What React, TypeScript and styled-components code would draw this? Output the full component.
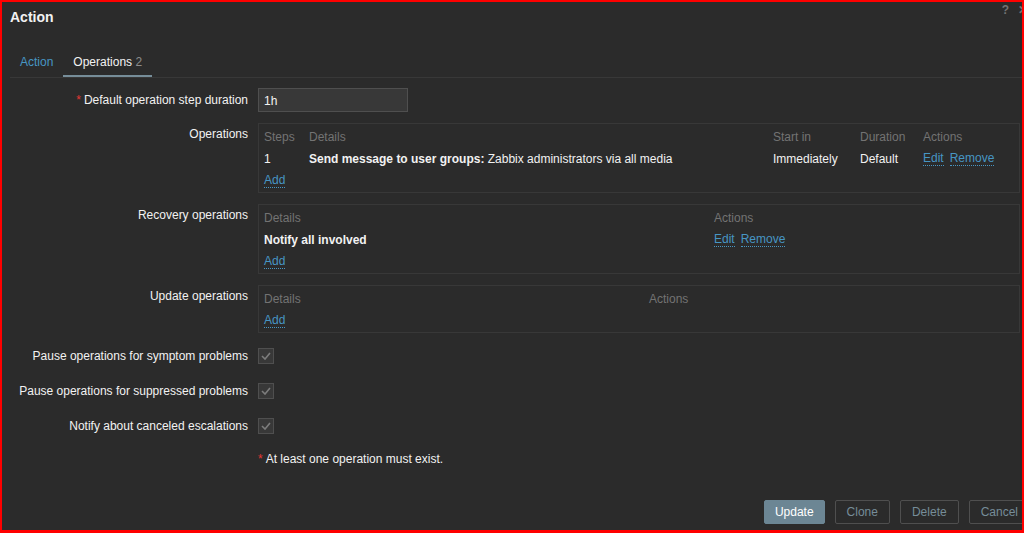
import styled, { createGlobalStyle } from 'styled-components';

const GlobalStyle = createGlobalStyle`
  html, body {
    margin: 0;
    padding: 0;
    background: #2b2b2b;
  }
  body {
    font-family: "Liberation Sans", Arial, sans-serif;
    font-size: 12px;
    color: #f2f2f2;
  }
`;

const Frame = styled.div`
  width: 1024px;
  height: 533px;
  box-sizing: border-box;
  border: 2px solid #ff0000;
  border-bottom-width: 3px;
  background: #2b2b2b;
  overflow: hidden;
  display: flex;
  flex-direction: column;
`;

const Header = styled.div`
  height: 47px;
  box-sizing: border-box;
  padding: 6px 0 0 8px;
  display: flex;
  align-items: flex-start;
`;

const Title = styled.h4`
  margin: 0;
  font-size: 14px;
  line-height: 18px;
  font-weight: bold;
  color: #f2f2f2;
`;

const HeaderIcons = styled.div`
  margin-left: auto;
  margin-top: -5px;
  margin-right: -6px;
  display: flex;
  gap: 9px;
`;

const HeaderIcon = styled.span`
  font-size: 12px;
  font-weight: bold;
  color: #737373;
  line-height: 14px;
`;

const Tabs = styled.div`
  margin-left: 8px;
  display: flex;
  border-bottom: 1px solid #383838;
`;

const Tab = styled.div<{ $active?: boolean }>`
  padding: 6px 10px;
  line-height: 14px;
  border-bottom: 2px solid ${(p) => (p.$active ? '#768d99' : 'transparent')};
  color: ${(p) => (p.$active ? '#f2f2f2' : '#4796c4')};
`;

const TabCount = styled.span`
  color: #8c8c8c;
`;

const Form = styled.div`
  padding: 10px 2px 0 8px;
  display: grid;
  grid-template-columns: 238px 1fr;
  column-gap: 10px;
  row-gap: 11px;
  align-items: center;
`;

const Label = styled.label<{ $top?: boolean }>`
  text-align: right;
  line-height: 22px;
  align-self: ${(p) => (p.$top ? 'start' : 'center')};
  color: #f2f2f2;
`;

const Asterisk = styled.span`
  color: #e33734;
  margin-right: 3px;
`;

const TextInput = styled.input`
  width: 150px;
  height: 24px;
  box-sizing: border-box;
  padding: 1px 5px 0;
  background: #383838;
  border: 1px solid #4f4f4f;
  color: #f2f2f2;
  font-family: inherit;
  font-size: 12px;
  outline: none;
`;

const Box = styled.div`
  border: 1px solid #383838;
  padding: 2px 5px 0;
`;

const Row = styled.div<{ $cols: string }>`
  display: grid;
  grid-template-columns: ${(p) => p.$cols};
  line-height: 22px;
  height: 22px;
`;

const Head = styled.span`
  color: #737373;
`;

const Cell = styled.span`
  color: #f2f2f2;
  white-space: nowrap;
`;

const Strong = styled.b`
  font-weight: bold;
`;

const Links = styled.span`
  display: flex;
  gap: 6px;
  align-items: center;
`;

const Link = styled.a`
  color: #4796c4;
  text-decoration: none;
  border-bottom: 1px dotted #4796c4;
  line-height: 13px;
  cursor: pointer;
`;

const AddRow = styled.div`
  height: 22px;
  display: flex;
  align-items: center;
`;

const CheckRow = styled.div`
  height: 24px;
  display: flex;
  align-items: center;
`;

const Checkbox = styled.span`
  width: 16px;
  height: 16px;
  box-sizing: border-box;
  background: #383838;
  border: 1px solid #4f4f4f;
  display: flex;
  align-items: center;
  justify-content: center;
`;

const Note = styled.div`
  line-height: 20px;
  color: #f2f2f2;
`;

const Footer = styled.div`
  margin-top: auto;
  margin-right: -8px;
  padding-bottom: 6px;
  display: flex;
  justify-content: flex-end;
  gap: 10px;
`;

const Button = styled.button<{ $alt?: boolean }>`
  height: 24px;
  padding: 0 ${(p) => (p.$alt ? 11 : 10)}px;
  font-family: inherit;
  font-size: 12px;
  border: 1px solid ${(p) => (p.$alt ? '#4f4f4f' : '#6c8694')};
  background: ${(p) => (p.$alt ? 'transparent' : '#6c8694')};
  color: ${(p) => (p.$alt ? '#768d99' : '#ffffff')};
  border-radius: 2px;
  cursor: pointer;
`;

function Check() {
  return (
    <Checkbox>
      <svg width="10" height="8" viewBox="0 0 10 8">
        <path d="M1 4 L4 7 L9 1" fill="none" stroke="#7d7d7d" strokeWidth="1.6" />
      </svg>
    </Checkbox>
  );
}

const opsCols = '45px 464px 87px 63px 1fr';

export default function App() {
  return (
    <>
      <GlobalStyle />
      <Frame>
        <Header>
          <Title>Action</Title>
          <HeaderIcons>
            <HeaderIcon>?</HeaderIcon>
            <HeaderIcon>✕</HeaderIcon>
          </HeaderIcons>
        </Header>

        <Tabs>
          <Tab>Action</Tab>
          <Tab $active>
            Operations <TabCount>2</TabCount>
          </Tab>
        </Tabs>

        <Form>
          <Label>
            <Asterisk>*</Asterisk>Default operation step duration
          </Label>
          <div>
            <TextInput defaultValue="1h" />
          </div>

          <Label $top>Operations</Label>
          <Box>
            <Row $cols={opsCols}>
              <Head>Steps</Head>
              <Head>Details</Head>
              <Head>Start in</Head>
              <Head>Duration</Head>
              <Head>Actions</Head>
            </Row>
            <Row $cols={opsCols}>
              <Cell>1</Cell>
              <Cell>
                <Strong>Send message to user groups:</Strong> Zabbix administrators via all media
              </Cell>
              <Cell>Immediately</Cell>
              <Cell>Default</Cell>
              <Links>
                <Link>Edit</Link>
                <Link>Remove</Link>
              </Links>
            </Row>
            <AddRow>
              <Link>Add</Link>
            </AddRow>
          </Box>

          <Label $top>Recovery operations</Label>
          <Box>
            <Row $cols="450px 1fr">
              <Head>Details</Head>
              <Head>Actions</Head>
            </Row>
            <Row $cols="450px 1fr">
              <Cell>
                <Strong>Notify all involved</Strong>
              </Cell>
              <Links>
                <Link>Edit</Link>
                <Link>Remove</Link>
              </Links>
            </Row>
            <AddRow>
              <Link>Add</Link>
            </AddRow>
          </Box>

          <Label $top>Update operations</Label>
          <Box>
            <Row $cols="385px 1fr">
              <Head>Details</Head>
              <Head>Actions</Head>
            </Row>
            <AddRow>
              <Link>Add</Link>
            </AddRow>
          </Box>

          <Label>Pause operations for symptom problems</Label>
          <CheckRow>
            <Check />
          </CheckRow>

          <Label>Pause operations for suppressed problems</Label>
          <CheckRow>
            <Check />
          </CheckRow>

          <Label>Notify about canceled escalations</Label>
          <CheckRow>
            <Check />
          </CheckRow>

          <div />
          <Note>
            <Asterisk>*</Asterisk>At least one operation must exist.
          </Note>
        </Form>

        <Footer>
          <Button>Update</Button>
          <Button $alt>Clone</Button>
          <Button $alt>Delete</Button>
          <Button $alt>Cancel</Button>
        </Footer>
      </Frame>
    </>
  );
}
